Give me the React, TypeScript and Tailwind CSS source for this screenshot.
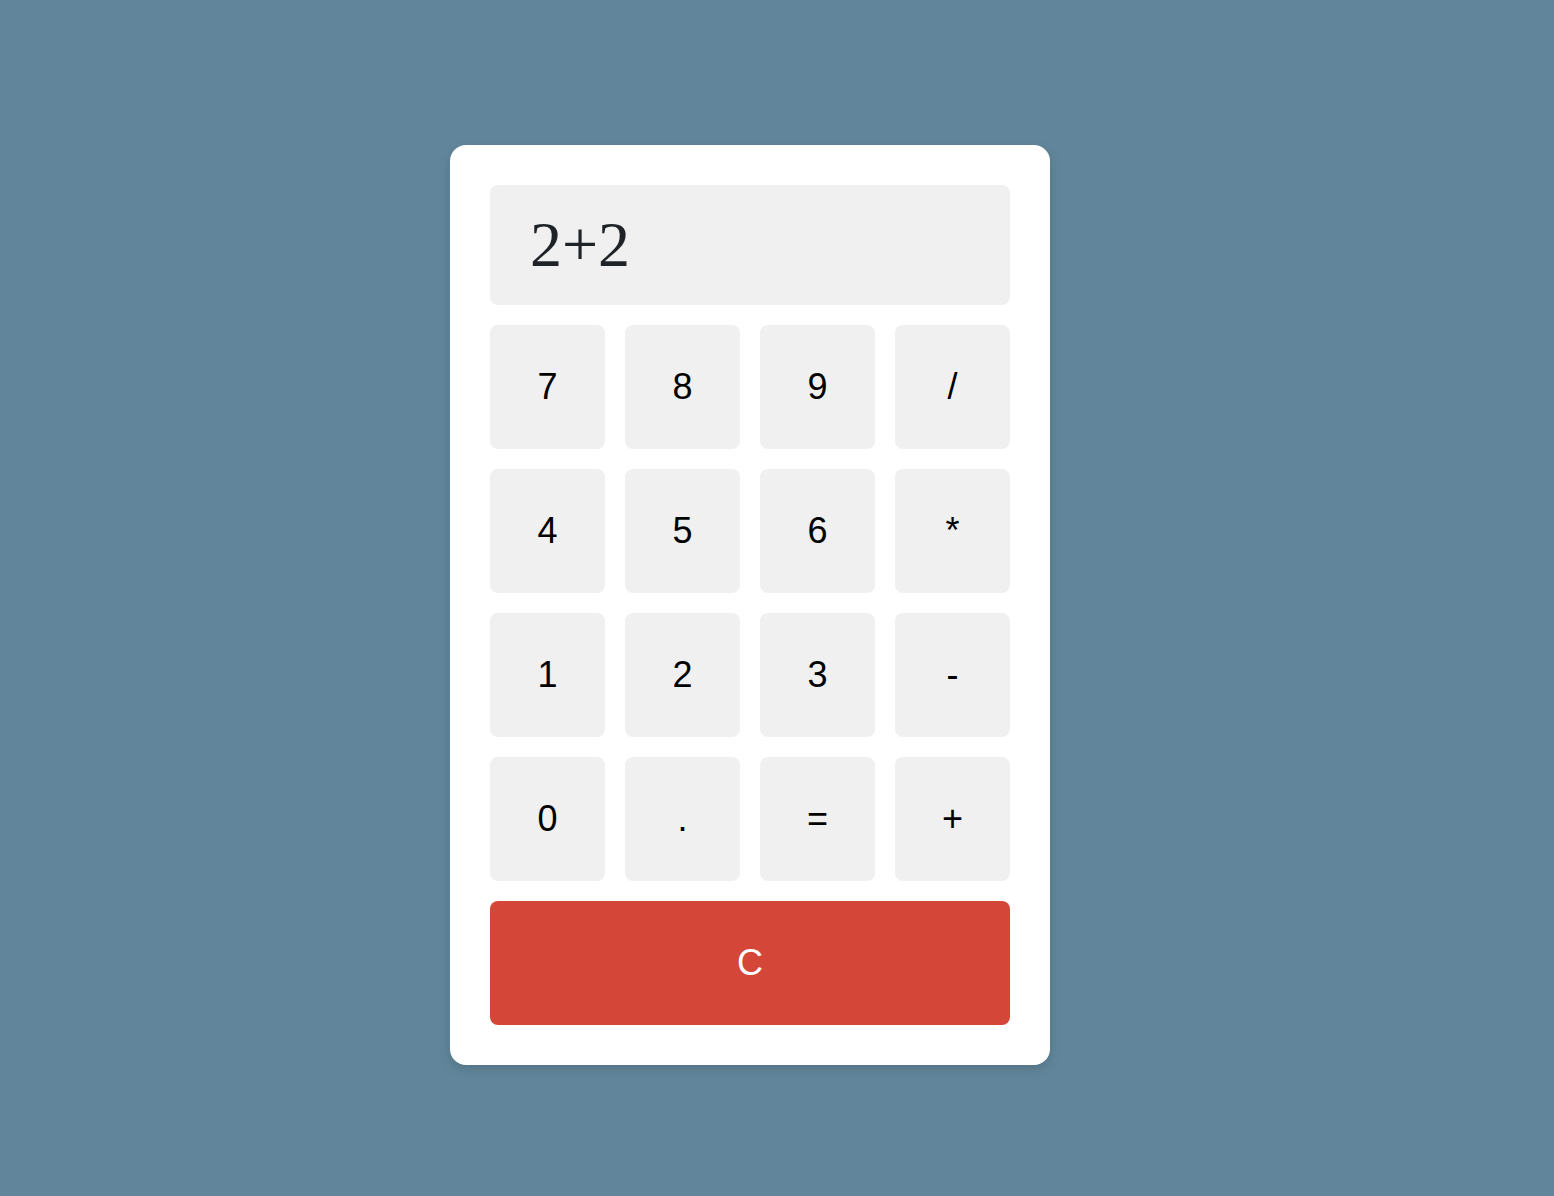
import React from "react";

const keys = ["7", "8", "9", "/", "4", "5", "6", "*", "1", "2", "3", "-", "0", ".", "=", "+"];

export default function App() {
  return (
    <div className="min-h-screen w-full bg-[#61869b] pl-[450px] pt-[145px] pb-[131px]">
      <div className="w-[600px] rounded-2xl bg-white p-10 shadow-[0_4px_12px_rgba(0,0,0,0.15)]">
        <div className="flex h-[120px] items-center rounded-lg bg-[#f0f0f0] px-10 text-[64px] leading-none text-[#1f2328] [font-family:'Liberation_Serif','Times_New_Roman',serif]">
          2+2
        </div>
        <div className="mt-5 grid grid-cols-4 gap-5">
          {keys.map((k) => (
            <button
              key={k}
              className="flex h-[124px] items-center justify-center rounded-lg bg-[#f0f0f0] text-[36px] text-black [font-family:'Liberation_Sans',Arial,sans-serif]"
            >
              {k}
            </button>
          ))}
        </div>
        <button className="mt-5 flex h-[124px] w-full items-center justify-center rounded-lg bg-[#d44638] text-[36px] text-white [font-family:'Liberation_Sans',Arial,sans-serif]">
          C
        </button>
      </div>
    </div>
  );
}
